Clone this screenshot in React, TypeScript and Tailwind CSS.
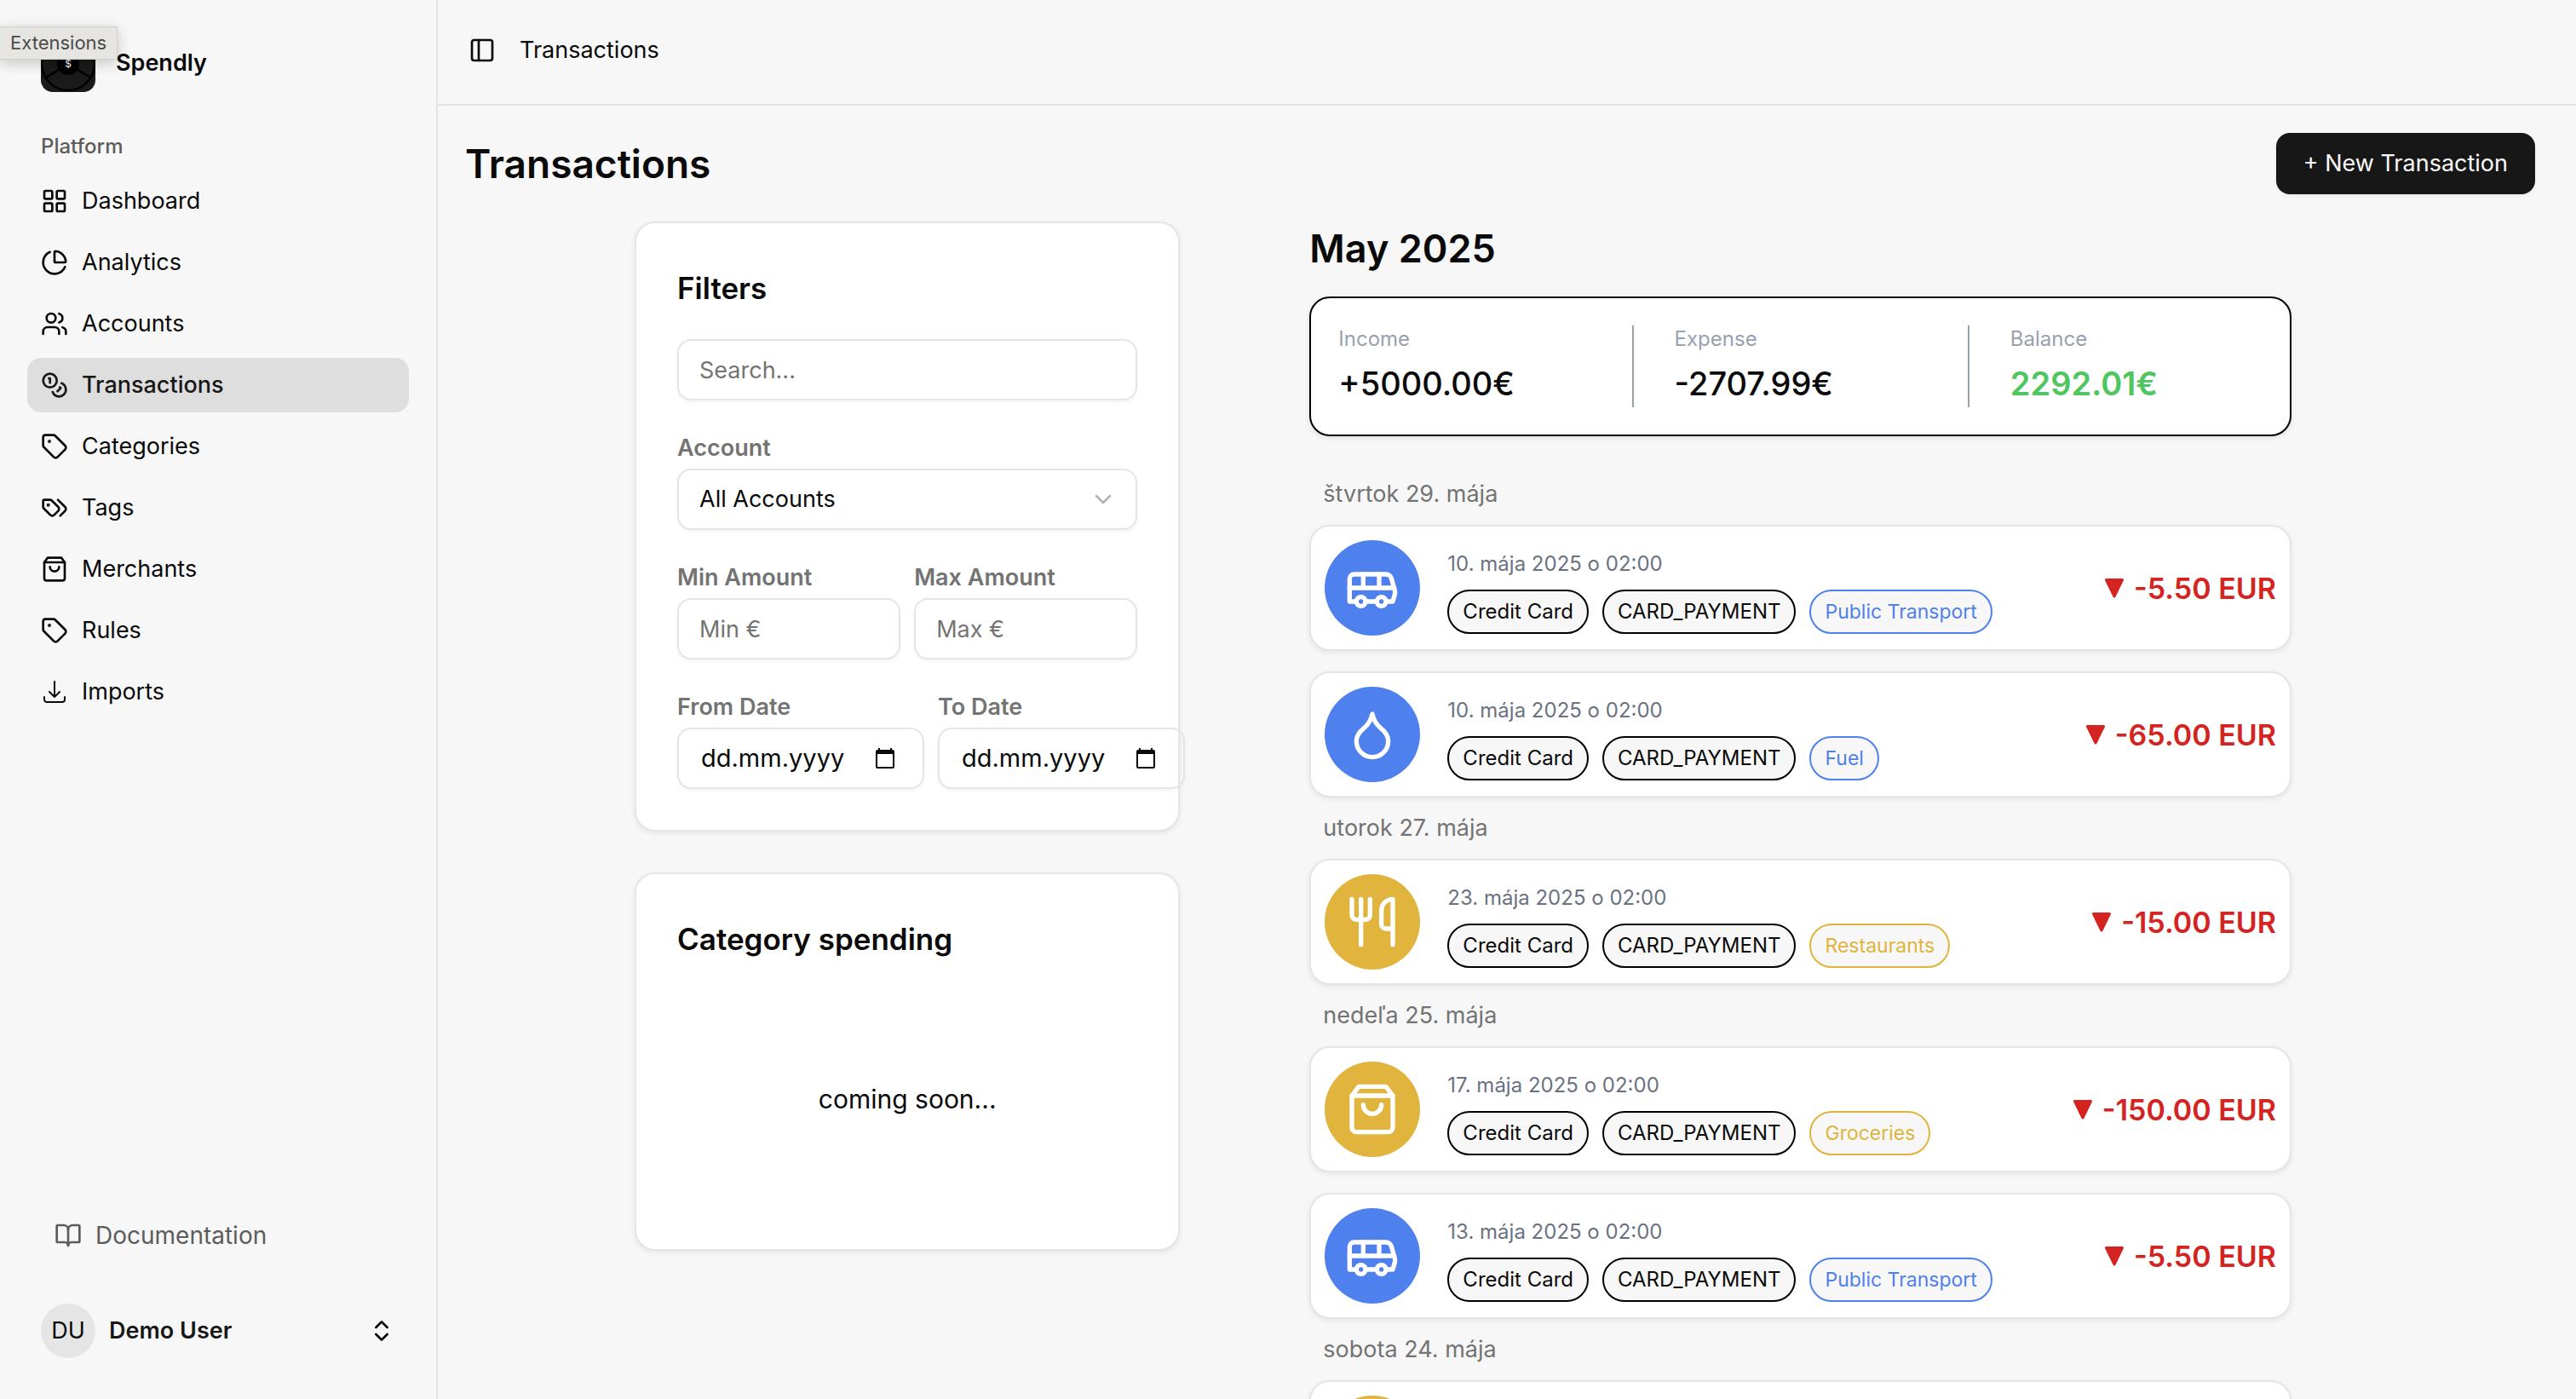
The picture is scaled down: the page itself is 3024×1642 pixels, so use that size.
import type { ReactNode } from "react";
import {
  BookOpen,
  Bus,
  ChartPie,
  ChevronDown,
  ChevronsUpDown,
  Coins,
  Droplet,
  LayoutGrid,
  PanelLeft,
  Tag,
  Users,
  Utensils,
} from "lucide-react";

function BagIcon({ className }: { className?: string }) {
  return (
    <svg viewBox="0 0 24 24" fill="none" stroke="currentColor" strokeWidth="2" strokeLinecap="round" strokeLinejoin="round" className={className} aria-hidden="true">
      <path d="M6 2 3 6v14a2 2 0 0 0 2 2h14a2 2 0 0 0 2-2V6l-3-4Z" />
      <path d="M3 6h18" />
      <path d="M16 10a4 4 0 0 1-8 0" />
    </svg>
  );
}

function TagsIcon({ className }: { className?: string }) {
  return (
    <svg viewBox="0 0 24 24" fill="none" stroke="currentColor" strokeWidth="2" strokeLinecap="round" strokeLinejoin="round" className={className} aria-hidden="true">
      <path d="m15 5 6.300 6.300a2.400 2.400 0 0 1 0 3.400L17 19" />
      <path d="M9.586 5.586A2 2 0 0 0 8.172 5H3a1 1 0 0 0-1 1v5.172a2 2 0 0 0 .586 1.414L8.290 18.290a2.426 2.426 0 0 0 3.420 0l3.580-3.580a2.426 2.426 0 0 0 0-3.420z" />
      <circle cx="6.500" cy="9.500" r=".5" fill="currentColor" />
    </svg>
  );
}

function ImportIcon({ className }: { className?: string }) {
  return (
    <svg viewBox="0 0 24 24" fill="none" stroke="currentColor" strokeWidth="1.5" strokeLinecap="round" strokeLinejoin="round" className={className} aria-hidden="true">
      <path d="M3 16.5v2.25A2.25 2.25 0 0 0 5.25 21h13.5A2.25 2.25 0 0 0 21 18.75V16.5M16.5 12 12 16.5m0 0L7.5 12m4.5 4.5V3" />
    </svg>
  );
}

function CalendarIcon({ className }: { className?: string }) {
  return (
    <svg viewBox="0 0 24 24" fill="currentColor" className={className} aria-hidden="true">
      <path d="M4 0h2v2h12V0h2v2h1a2 2 0 0 1 2 2v18a2 2 0 0 1-2 2H3a2 2 0 0 1-2-2V4a2 2 0 0 1 2-2h1V0Zm-1 7v15h18V7H3Z" />
    </svg>
  );
}

function LogoMark() {
  return (
    <svg viewBox="0 0 64 64" className="size-16 shrink-0" role="img" aria-label="Spendly logo">
      <rect width="64" height="64" rx="14" fill="#1a1a1a" />
      <circle cx="32" cy="31" r="31" fill="none" stroke="#000" strokeWidth="2.5" />
      <path d="M32 31 6 47M32 31l26 16M32 31V0" stroke="#000" strokeWidth="2.5" />
      <circle cx="32" cy="31" r="13" fill="#000" />
      <text x="32" y="35" textAnchor="middle" fontSize="12" fontFamily="Inter, sans-serif" fill="#fff">
        $
      </text>
    </svg>
  );
}

const navItems: { label: string; icon: ReactNode; active?: boolean }[] = [
  { label: "Dashboard", icon: <LayoutGrid className="size-8" /> },
  { label: "Analytics", icon: <ChartPie className="size-8" /> },
  { label: "Accounts", icon: <Users className="size-8" /> },
  { label: "Transactions", icon: <Coins className="size-8" />, active: true },
  { label: "Categories", icon: <Tag className="size-8" /> },
  { label: "Tags", icon: <TagsIcon className="size-8" /> },
  { label: "Merchants", icon: <BagIcon className="size-8" /> },
  { label: "Rules", icon: <Tag className="size-8" /> },
  { label: "Imports", icon: <ImportIcon className="size-8" /> },
];

type Tone = "blue" | "amber";

const toneFill: Record<Tone, string> = {
  blue: "bg-[#4e80ee]",
  amber: "bg-[#e0b43d]",
};

const toneBadge: Record<Tone, string> = {
  blue: "border-[#4e80ee] text-[#4e80ee]",
  amber: "border-[#e0b43d] text-[#e0b43d]",
};

interface Transaction {
  tone: Tone;
  icon: ReactNode;
  details?: { date: string; category: string; amount: string };
}

const days: { label: string; items: Transaction[] }[] = [
  {
    label: "štvrtok 29. mája",
    items: [
      { tone: "blue", icon: <Bus className="size-16" />, details: { date: "10. mája 2025 o 02:00", category: "Public Transport", amount: "-5.50 EUR" } },
      { tone: "blue", icon: <Droplet className="size-16" />, details: { date: "10. mája 2025 o 02:00", category: "Fuel", amount: "-65.00 EUR" } },
    ],
  },
  {
    label: "utorok 27. mája",
    items: [
      { tone: "amber", icon: <Utensils className="size-16" />, details: { date: "23. mája 2025 o 02:00", category: "Restaurants", amount: "-15.00 EUR" } },
    ],
  },
  {
    label: "nedeľa 25. mája",
    items: [
      { tone: "amber", icon: <BagIcon className="size-16" />, details: { date: "17. mája 2025 o 02:00", category: "Groceries", amount: "-150.00 EUR" } },
      { tone: "blue", icon: <Bus className="size-16" />, details: { date: "13. mája 2025 o 02:00", category: "Public Transport", amount: "-5.50 EUR" } },
    ],
  },
  {
    label: "sobota 24. mája",
    items: [{ tone: "amber", icon: <BagIcon className="size-16" /> }],
  },
];

const cardClass = "rounded-3xl border-2 border-[#e5e5e5] bg-white shadow-[0_2px_6px_rgba(0,0,0,0.08)]";
const fieldClass =
  "h-[72px] w-full rounded-2xl border-2 border-[#e5e5e5] bg-transparent px-6 text-[27px] shadow-[0_2px_4px_rgba(0,0,0,0.05)] outline-none placeholder:text-[#737373]";
const labelClass = "flex h-12 items-center text-[27px] font-semibold text-[#737373]";

function Sidebar() {
  return (
    <aside className="flex h-full w-[514px] shrink-0 flex-col border-r-2 border-[#e5e5e5] pt-11 pb-12">
      <a href="#" className="flex items-center gap-6 px-12">
        <LogoMark />
        <span className="pb-1 text-[27px] font-semibold">Spendly</span>
      </a>
      <div className="mt-10 flex h-12 items-center px-12 text-2xl font-medium text-[#5c5c5c]">Platform</div>
      <nav className="mt-2 flex flex-col gap-2 px-8">
        {navItems.map((item) => (
          <a
            key={item.label}
            href="#"
            aria-current={item.active ? "page" : undefined}
            className={`flex h-16 items-center gap-4 rounded-2xl px-4 text-[27px] ${item.active ? "bg-[#dedede] font-medium text-[#171717]" : ""}`}
          >
            {item.icon}
            {item.label}
          </a>
        ))}
      </nav>
      <a href="#" className="mt-auto flex h-16 items-center gap-4 px-16 text-[28px] text-[#5c5c5c]">
        <BookOpen className="size-8" />
        Documentation
      </a>
      <button type="button" className="mt-12 flex h-16 items-center gap-4 px-12 text-[27px]">
        <span className="flex size-16 items-center justify-center rounded-full bg-[#e5e5e5]">DU</span>
        <span className="font-semibold text-[#171717]">Demo User</span>
        <ChevronsUpDown className="ml-auto size-8" />
      </button>
    </aside>
  );
}

function DateField({ id, label }: { id: string; label: string }) {
  return (
    <div className="w-[290px] shrink-0">
      <label htmlFor={id} className={labelClass}>
        {label}
      </label>
      <div className="flex h-[72px] items-center rounded-2xl border-2 border-[#e5e5e5] pr-8 pl-[26px] shadow-[0_2px_4px_rgba(0,0,0,0.05)]">
        <input id={id} type="text" placeholder="dd.mm.yyyy" className="min-w-0 flex-1 bg-transparent text-[29px] outline-none placeholder:text-[#0a0a0a]" />
        <button type="button" aria-label={`Pick ${label}`}>
          <CalendarIcon className="size-6" />
        </button>
      </div>
    </div>
  );
}

function Filters() {
  return (
    <section className={`${cardClass} p-12`}>
      <h2 className="text-[35px]/[56px] font-semibold">Filters</h2>
      <input type="text" aria-label="Search" placeholder="Search..." className={`${fieldClass} mt-8`} />
      <div className="mt-8">
        <label htmlFor="account" className={labelClass}>
          Account
        </label>
        <div className="relative">
          <select id="account" className={`${fieldClass} appearance-none`}>
            <option>All Accounts</option>
          </select>
          <ChevronDown className="pointer-events-none absolute inset-y-0 right-6 my-auto size-8 text-[#b3b3b3]" />
        </div>
      </div>
      <div className="mt-8 grid grid-cols-2 gap-4">
        <div>
          <label htmlFor="min" className={labelClass}>
            Min Amount
          </label>
          <input id="min" type="text" placeholder="Min €" className={fieldClass} />
        </div>
        <div>
          <label htmlFor="max" className={labelClass}>
            Max Amount
          </label>
          <input id="max" type="text" placeholder="Max €" className={fieldClass} />
        </div>
      </div>
      <div className="mt-8 flex gap-4">
        <DateField id="from" label="From Date" />
        <DateField id="to" label="To Date" />
      </div>
    </section>
  );
}

function Stat({ label, value, valueClass }: { label: string; value: string; valueClass: string }) {
  return (
    <div className="flex flex-1 flex-col gap-2">
      <span className="text-2xl/8 text-[#99a1af]">{label}</span>
      <span className={`text-[38px]/[56px] ${valueClass}`}>{value}</span>
    </div>
  );
}

function Badge({ className, children }: { className: string; children: ReactNode }) {
  return (
    <span className={`flex h-[52px] items-center rounded-full border-2 bg-[#f7f7f7] px-4 whitespace-nowrap ${className}`}>
      {children}
    </span>
  );
}

function TransactionCard({ tone, icon, details }: Transaction) {
  return (
    <article className={`${cardClass} flex items-center p-4`}>
      <div className={`flex size-28 shrink-0 items-center justify-center rounded-full text-white ${toneFill[tone]}`}>{icon}</div>
      {details && (
        <>
          <div className="ml-8 flex flex-col gap-3 self-end pb-[2px]">
            <time className="text-2xl/9 text-[#6a7282]">{details.date}</time>
            <div className="flex gap-4">
              <Badge className="border-black text-2xl">Credit Card</Badge>
              <Badge className="border-black text-2xl">CARD_PAYMENT</Badge>
              <Badge className={`text-[23px] ${toneBadge[tone]}`}>{details.category}</Badge>
            </div>
          </div>
          <div className="ml-auto flex items-center gap-3 text-[34px] font-semibold whitespace-nowrap text-[#d42422]">
            <svg viewBox="0 0 22 23" className="h-[23px] w-[22px]" fill="currentColor" stroke="currentColor" strokeWidth="3" strokeLinejoin="round" aria-hidden="true">
              <path d="M1.500 1.500h19L11 21Z" />
            </svg>
            {details.amount}
          </div>
        </>
      )}
    </article>
  );
}

export default function App() {
  return (
    <div className="relative flex h-screen overflow-hidden bg-[#f7f7f7] font-['Inter',sans-serif] text-[#0a0a0a]">
      <Sidebar />
      <div className="flex min-w-0 flex-1 flex-col">
        <header className="flex h-[124px] shrink-0 items-center gap-7 border-b-2 border-[#e5e5e5] px-9 pb-1 text-[27px]">
          <button type="button" aria-label="Toggle sidebar">
            <PanelLeft className="size-8" />
          </button>
          <span>Transactions</span>
        </header>
        <main className="flex-1 overflow-y-auto pt-8 pr-12 pl-8 [scrollbar-width:none]">
          <div className="flex items-center justify-between">
            <h1 className="text-[46px]/[56px] font-semibold">Transactions</h1>
            <button type="button" className="h-[72px] rounded-2xl bg-[#171717] px-8 text-[27px] text-[#fafafa] shadow-[0_2px_4px_rgba(0,0,0,0.05)]">
              + New Transaction
            </button>
          </div>
          <div className="mt-8 flex items-start gap-[152px] pr-[286px] pl-[199px]">
            <div className="flex min-w-0 flex-5 flex-col gap-12">
              <Filters />
              <section className={`${cardClass} p-12`}>
                <h2 className="text-[35px]/[56px] font-semibold">Category spending</h2>
                <div className="mt-8 flex h-64 items-center justify-center text-[30px]">coming soon...</div>
              </section>
            </div>
            <div className="min-w-0 flex-9">
              <h2 className="text-[45px]/[64px] font-semibold">May 2025</h2>
              <div className="mt-6 flex gap-12 rounded-3xl border-2 border-black bg-white p-8 shadow-[0_2px_6px_rgba(0,0,0,0.1)]">
                <Stat label="Income" value="+5000.00€" valueClass="font-medium" />
                <div className="w-[2px] bg-[#99a1af]" />
                <Stat label="Expense" value="-2707.99€" valueClass="font-medium" />
                <div className="w-[2px] bg-[#99a1af]" />
                <Stat label="Balance" value="2292.01€" valueClass="font-semibold text-[#4fc65f]" />
              </div>
              <div className="mt-8">
                {days.map((day) => (
                  <section key={day.label}>
                    <h3 className="flex h-[72px] items-center px-4 text-[27px] text-[#737373]">{day.label}</h3>
                    <div className="flex flex-col gap-6">
                      {day.items.map((item, i) => (
                        <TransactionCard key={i} {...item} />
                      ))}
                    </div>
                  </section>
                ))}
              </div>
            </div>
          </div>
        </main>
      </div>
      <div
        role="tooltip"
        className="absolute top-[31px] left-0 flex h-[39px] items-center border border-l-0 border-[#cfcfcc] bg-[#e6e5e1] px-3 text-[22px] text-[#4b4b4b] shadow-[0_4px_16px_rgba(0,0,0,0.2)]"
      >
        Extensions
      </div>
    </div>
  );
}
